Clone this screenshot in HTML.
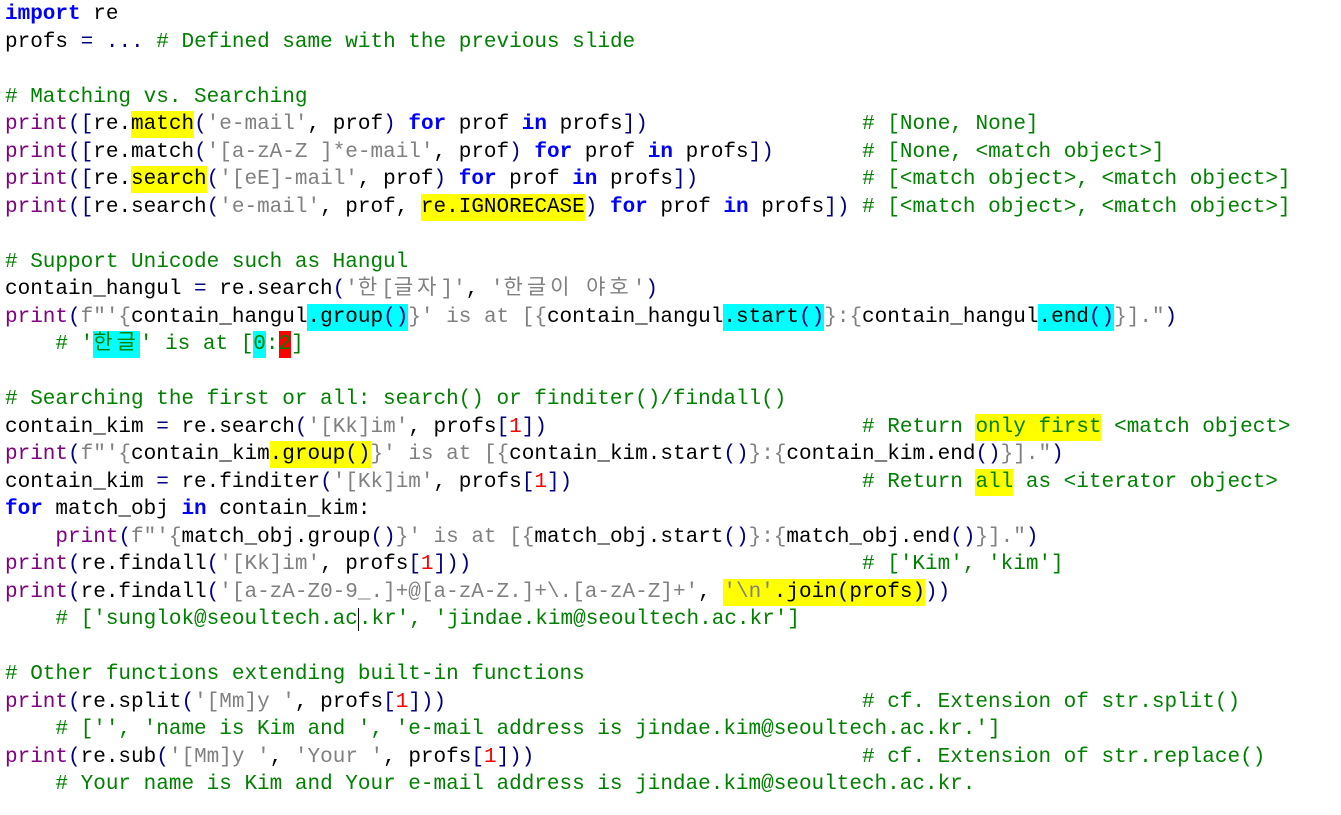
<!DOCTYPE html>
<html><head><meta charset="utf-8"><style>
html,body{margin:0;padding:0;background:#fff;width:1341px;height:815px;overflow:hidden}
pre{margin:0;padding:1px 0 0 5px;font-family:"Liberation Mono","Noto Sans CJK KR",monospace;font-size:21px;line-height:27.5px;color:#000;white-space:pre}
.k{color:#0000ff;font-weight:bold}
.p{color:#800080}
.o{color:#000080}
.s{color:#808080}
.c{color:#008000}
.n{color:#ff0000}
.y{background:#ffff00;padding:2px 0}
.q{background:#00ffff;padding:2px 0}
.r{background:#ff0000;padding:2px 0}
.h{letter-spacing:4px}
.cur{border-left:1px solid #000}
</style></head><body><pre><span class="k">import</span> re
profs <span class="o">=</span> <span class="o">...</span> <span class="c"># Defined same with the previous slide</span>

<span class="c"># Matching vs. Searching</span>
<span class="p">print</span><span class="o">([</span>re.<span class="y">match</span><span class="o">(</span><span class="s">'e-mail'</span>, prof<span class="o">)</span> <span class="k">for</span> prof <span class="k">in</span> profs<span class="o">])</span>                 <span class="c"># [None, None]</span>
<span class="p">print</span><span class="o">([</span>re.match<span class="o">(</span><span class="s">'[a-zA-Z ]*e-mail'</span>, prof<span class="o">)</span> <span class="k">for</span> prof <span class="k">in</span> profs<span class="o">])</span>       <span class="c"># [None, &lt;match object&gt;]</span>
<span class="p">print</span><span class="o">([</span>re.<span class="y">search</span><span class="o">(</span><span class="s">'[eE]-mail'</span>, prof<span class="o">)</span> <span class="k">for</span> prof <span class="k">in</span> profs<span class="o">])</span>             <span class="c"># [&lt;match object&gt;, &lt;match object&gt;]</span>
<span class="p">print</span><span class="o">([</span>re.search<span class="o">(</span><span class="s">'e-mail'</span>, prof, <span class="y">re.IGNORECASE</span><span class="o">)</span> <span class="k">for</span> prof <span class="k">in</span> profs<span class="o">])</span> <span class="c"># [&lt;match object&gt;, &lt;match object&gt;]</span>

<span class="c"># Support Unicode such as Hangul</span>
contain_hangul <span class="o">=</span> re.search<span class="o">(</span><span class="s">'<span class="h">한</span>[<span class="h">글자</span>]'</span>, <span class="s">'<span class="h">한글이</span> <span class="h">야호</span>'</span><span class="o">)</span>
<span class="p">print</span><span class="o">(</span><span class="s">f"'{</span>contain_hangul<span class="q">.group<span class="o">()</span></span><span class="s">}' is at [{</span>contain_hangul<span class="q">.start<span class="o">()</span></span><span class="s">}:{</span>contain_hangul<span class="q">.end<span class="o">()</span></span><span class="s">}]."</span><span class="o">)</span>
    <span class="c"># '<span class="q h">한글</span>' is at [<span class="q">0</span>:<span class="r">2</span>]</span>

<span class="c"># Searching the first or all: search() or finditer()/findall()</span>
contain_kim <span class="o">=</span> re.search<span class="o">(</span><span class="s">'[Kk]im'</span>, profs<span class="o">[</span><span class="n">1</span><span class="o">])</span>                         <span class="c"># Return <span class="y">only first</span> &lt;match object&gt;</span>
<span class="p">print</span><span class="o">(</span><span class="s">f"'{</span>contain_kim<span class="y">.group<span class="o">()</span></span><span class="s">}' is at [{</span>contain_kim.start<span class="o">()</span><span class="s">}:{</span>contain_kim.end<span class="o">()</span><span class="s">}]."</span><span class="o">)</span>
contain_kim <span class="o">=</span> re.finditer<span class="o">(</span><span class="s">'[Kk]im'</span>, profs<span class="o">[</span><span class="n">1</span><span class="o">])</span>                       <span class="c"># Return <span class="y">all</span> as &lt;iterator object&gt;</span>
<span class="k">for</span> match_obj <span class="k">in</span> contain_kim:
    <span class="p">print</span><span class="o">(</span><span class="s">f"'{</span>match_obj.group<span class="o">()</span><span class="s">}' is at [{</span>match_obj.start<span class="o">()</span><span class="s">}:{</span>match_obj.end<span class="o">()</span><span class="s">}]."</span><span class="o">)</span>
<span class="p">print</span><span class="o">(</span>re.findall<span class="o">(</span><span class="s">'[Kk]im'</span>, profs<span class="o">[</span><span class="n">1</span><span class="o">]))</span>                               <span class="c"># ['Kim', 'kim']</span>
<span class="p">print</span><span class="o">(</span>re.findall<span class="o">(</span><span class="s">'[a-zA-Z0-9_.]+@[a-zA-Z.]+\.[a-zA-Z]+'</span>, <span class="y"><span class="s">'\n'</span>.join<span class="o">(</span>profs<span class="o">)</span></span><span class="o">))</span>
    <span class="c"># ['sunglok@seoultech.ac<span class="cur"></span>.kr', 'jindae.kim@seoultech.ac.kr']</span>

<span class="c"># Other functions extending built-in functions</span>
<span class="p">print</span><span class="o">(</span>re.split<span class="o">(</span><span class="s">'[Mm]y '</span>, profs<span class="o">[</span><span class="n">1</span><span class="o">]))</span>                                 <span class="c"># cf. Extension of str.split()</span>
    <span class="c"># ['', 'name is Kim and ', 'e-mail address is jindae.kim@seoultech.ac.kr.']</span>
<span class="p">print</span><span class="o">(</span>re.sub<span class="o">(</span><span class="s">'[Mm]y '</span>, <span class="s">'Your '</span>, profs<span class="o">[</span><span class="n">1</span><span class="o">]))</span>                          <span class="c"># cf. Extension of str.replace()</span>
    <span class="c"># Your name is Kim and Your e-mail address is jindae.kim@seoultech.ac.kr.</span>
</pre></body></html>
